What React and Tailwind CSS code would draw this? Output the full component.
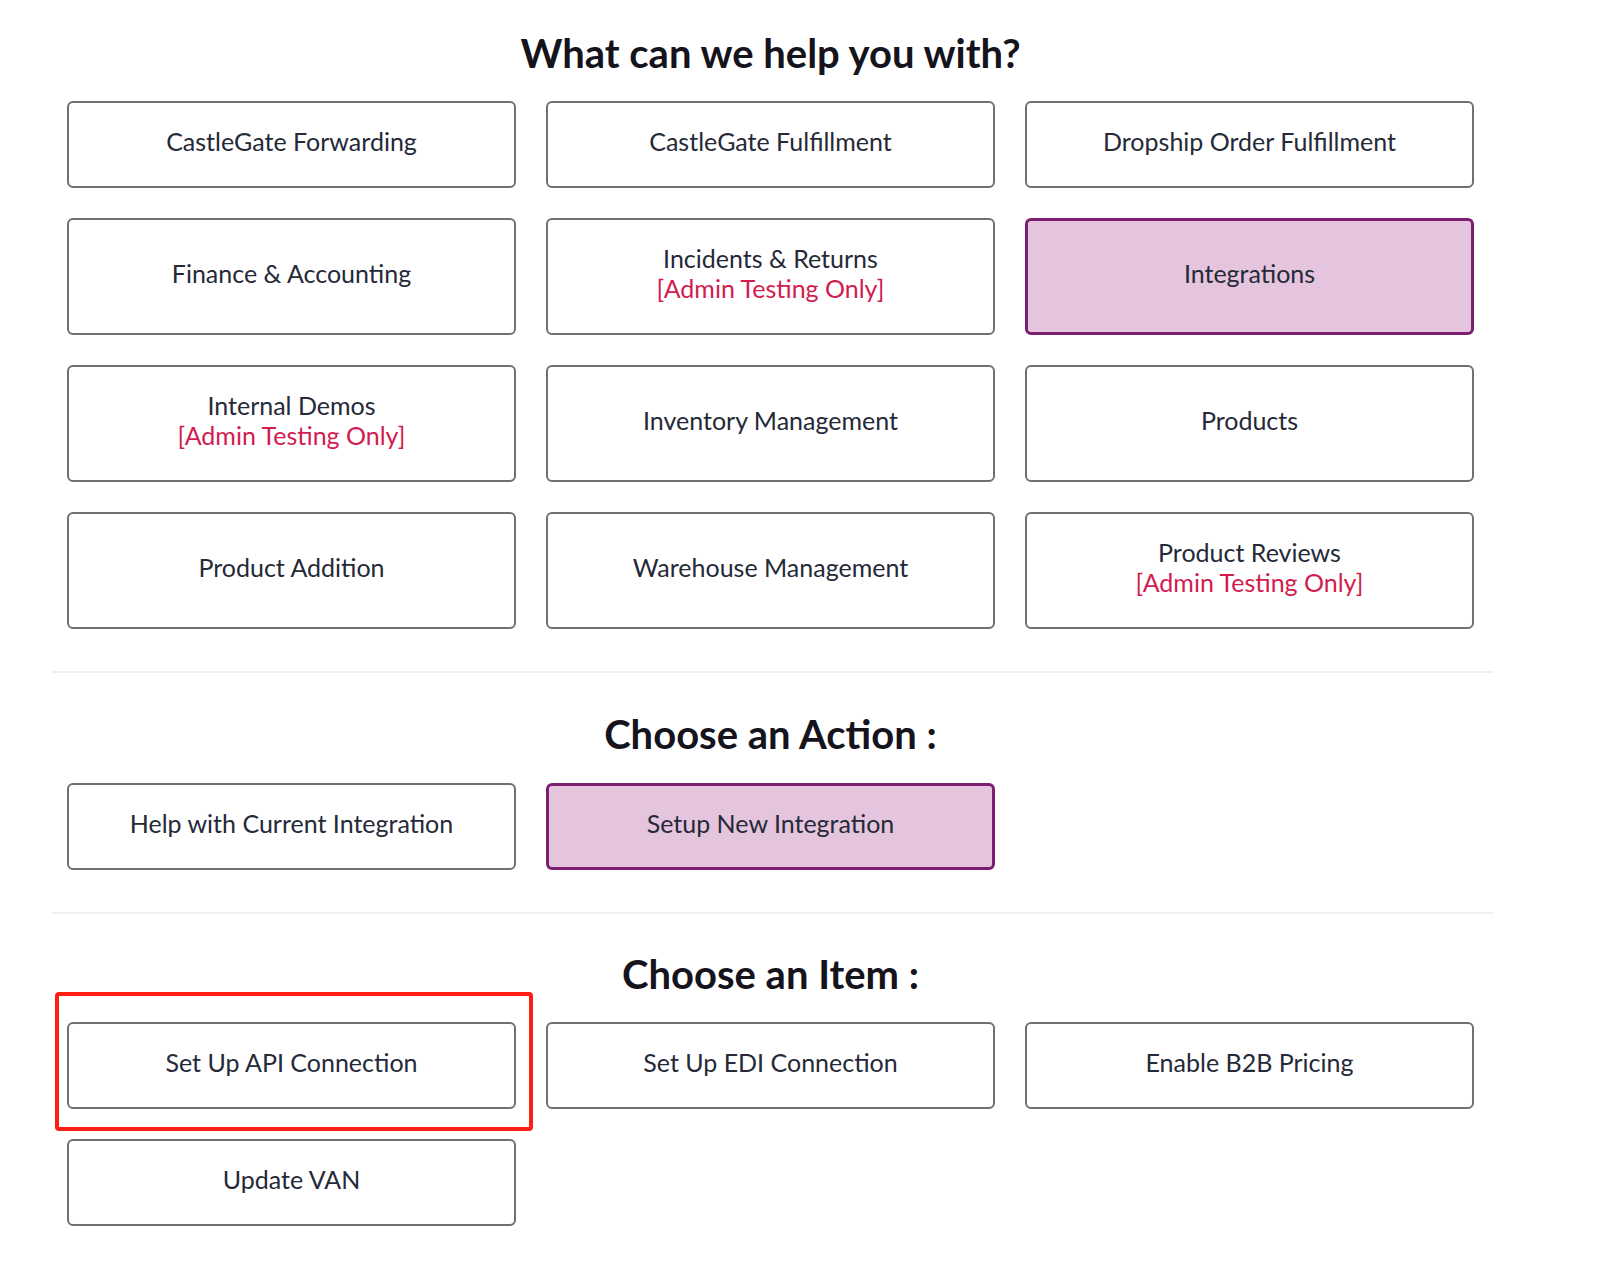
import React from "react";

const font = { fontFamily: "Lato, 'Noto Sans', sans-serif" };

function Btn({ label, sub, selected, tall }) {
  return (
    <div
      className={
        "flex flex-col items-center justify-center rounded-[6px] pb-[7px] text-center text-[25px] leading-[30px] text-[#252938] " +
        (tall ? "h-[117px] " : "h-[87px] ") +
        (selected
          ? "border-[3px] border-[#7c1f70] bg-[#e4c5dd]"
          : "border-2 border-[#707070] bg-white")
      }
    >
      <span>{label}</span>
      {sub && <span className="text-[#d21c50]">{sub}</span>}
    </div>
  );
}

function Heading({ children }) {
  return (
    <div className="ml-[15px] w-[1407px]">
      <h2 className="text-center text-[40px] font-bold leading-[48px] text-[#15131c]">
        {children}
      </h2>
    </div>
  );
}

const grid =
  "ml-[15px] grid w-[1407px] grid-cols-[449px_449px_449px] gap-x-[30px] gap-y-[30px]";

export default function App() {
  return (
    <div className="min-h-[1288px] w-[1600px] bg-white" style={font}>
      <div className="ml-[52px] w-[1441px] pt-[29px]">
        <Heading>What can we help you with?</Heading>
        <div className={grid + " mt-[24px]"}>
          <Btn label="CastleGate Forwarding" />
          <Btn label="CastleGate Fulfillment" />
          <Btn label="Dropship Order Fulfillment" />
          <Btn label="Finance & Accounting" tall />
          <Btn label="Incidents & Returns" sub="[Admin Testing Only]" tall />
          <Btn label="Integrations" selected tall />
          <Btn label="Internal Demos" sub="[Admin Testing Only]" tall />
          <Btn label="Inventory Management" tall />
          <Btn label="Products" tall />
          <Btn label="Product Addition" tall />
          <Btn label="Warehouse Management" tall />
          <Btn label="Product Reviews" sub="[Admin Testing Only]" tall />
        </div>

        <div className="mt-[42px] h-[2px] w-full bg-[#efefef]" />

        <div className="mt-[37px]">
          <Heading>Choose an Action :</Heading>
        </div>
        <div className={grid + " mt-[25px]"}>
          <Btn label="Help with Current Integration" />
          <Btn label="Setup New Integration" selected />
        </div>

        <div className="mt-[42px] h-[2px] w-full bg-[#efefef]" />

        <div className="mt-[36px]">
          <Heading>Choose an Item :</Heading>
        </div>
        <div className={grid + " mt-[24px]"}>
          <div className="relative">
            <div className="pointer-events-none absolute left-[-12px] right-[-17px] top-[-30px] bottom-[-22px] rounded-[4px] border-4 border-[#ff1e14]" />
            <Btn label="Set Up API Connection" />
          </div>
          <Btn label="Set Up EDI Connection" />
          <Btn label="Enable B2B Pricing" />
          <Btn label="Update VAN" />
        </div>
      </div>
    </div>
  );
}
